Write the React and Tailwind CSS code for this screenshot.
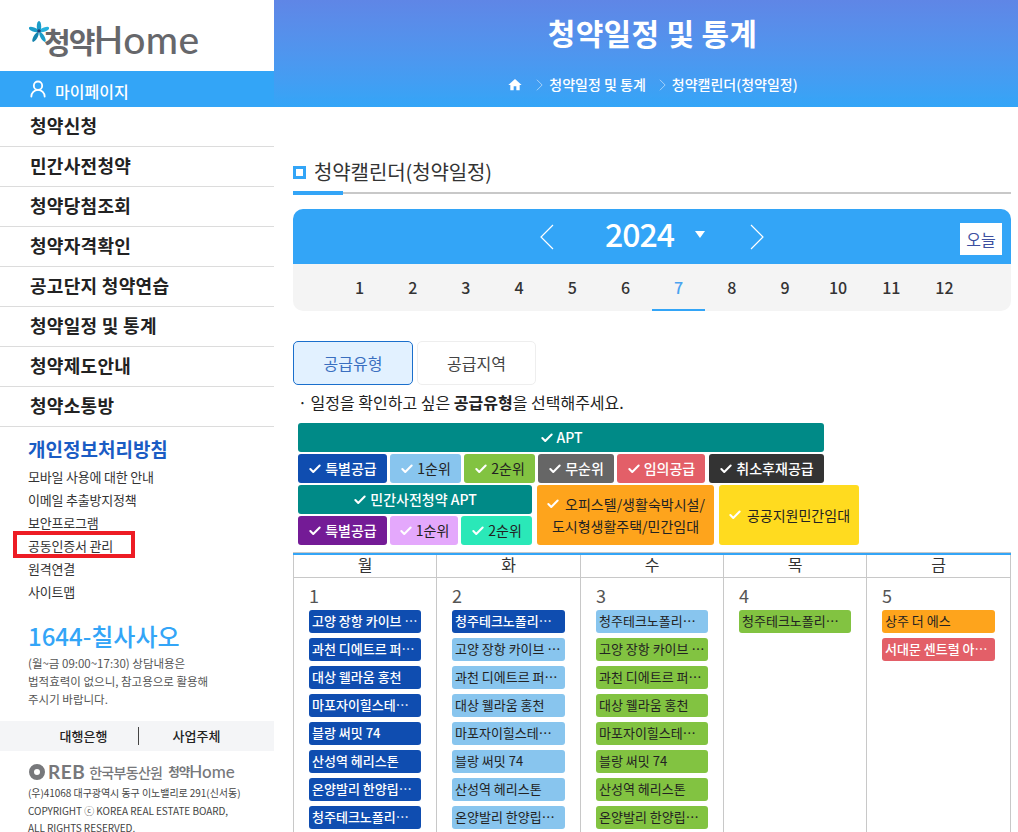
import React from "react";
import { Check, UserRound } from "lucide-react";
import { MdHome } from "react-icons/md";

const MENU = ["청약신청", "민간사전청약", "청약당첨조회", "청약자격확인", "공고단지 청약연습", "청약일정 및 통계", "청약제도안내", "청약소통방"];
const LINKS = ["모바일 사용에 대한 안내", "이메일 추출방지정책", "보안프로그램", "공동인증서 관리", "원격연결", "사이트맵"];
const MONTHS = [1, 2, 3, 4, 5, 6, 7, 8, 9, 10, 11, 12];

const NAMES = [
  "고양 장항 카이브 유시티 아파트",
  "과천 디에트르 퍼스티지 아파트",
  "대상 웰라움 홍천",
  "마포자이힐스테이트 라첼스",
  "블랑 써밋 74",
  "산성역 헤리스톤",
  "온양발리 한양립스 더 포레",
  "청주테크노폴리스 하트리움",
];
const MOVED = [NAMES[7], ...NAMES.slice(0, 7)];

const BLUE = "bg-[#0f4db0] text-white font-medium";
const SKY = "bg-[#88c5ee] text-[#222]";
const GREEN = "bg-[#82c341] text-[#222]";

const DAYS = [
  { day: "월", num: 1, width: "w-[144px]", chips: NAMES.map((n) => [n, BLUE]) },
  { day: "화", num: 2, width: "w-[144px]", chips: [[MOVED[0], BLUE], ...NAMES.slice(0, 7).map((n) => [n, SKY])] },
  { day: "수", num: 3, width: "w-[143px]", chips: [[MOVED[0], SKY], ...NAMES.slice(0, 7).map((n) => [n, GREEN])] },
  { day: "목", num: 4, width: "w-[143px]", chips: [[MOVED[0], GREEN]] },
  {
    day: "금",
    num: 5,
    width: "w-[144px]",
    chips: [
      ["상주 더 에스", "bg-[#fea41c] text-[#222]"],
      ["서대문 센트럴 아이파크", "bg-[#e35f68] text-white font-medium"],
    ],
  },
];

const Chevron = ({ dir, className }) => (
  <svg viewBox="0 0 16 26" className={className} fill="none" stroke="currentColor" strokeWidth="1.2">
    <path d={dir === "left" ? "M14 1 2 13l12 12" : "M2 1l12 12L2 25"} />
  </svg>
);

const Star = () => (
  <svg viewBox="0 0 20 23" className="w-[20px] h-[23px] shrink-0">
    <ellipse cx="10" cy="5.5" rx="2.2" ry="5.5" fill="#1b9cc9" />
    <ellipse cx="4.5" cy="8.5" rx="5" ry="2" transform="rotate(20 4.5 8.5)" fill="#1b9cc9" />
    <ellipse cx="15.5" cy="8.5" rx="5" ry="2" transform="rotate(-20 15.5 8.5)" fill="#27b1dd" />
    <ellipse cx="6.5" cy="16" rx="2" ry="5.5" transform="rotate(30 6.5 16)" fill="#1583ad" />
    <ellipse cx="13.5" cy="16" rx="2" ry="5.5" transform="rotate(-30 13.5 16)" fill="#1b9cc9" />
    <circle cx="10" cy="10" r="1.8" fill="#1d3f7a" />
  </svg>
);

const Sidebar = () => (
  <aside className="w-[274px] shrink-0 bg-white">
    <div className="h-[71px] pl-[29px] pt-[21px] flex items-start">
      <Star />
      <span className="-ml-[5px] mt-[2px] text-[29px] leading-[36px] font-bold text-[#66676b] tracking-[-2px]">청약</span>
      <span className="-mt-[4px] text-[39px] leading-[44px] font-['Lato'] font-medium tracking-[0.5px] text-[#66676b]">Home</span>
    </div>
    <div className="h-[36px] bg-[#33a5f7] flex items-center pl-[28px] gap-[7px] text-white">
      <UserRound size={20} strokeWidth={2.2} />
      <span className="text-[16px] font-medium pt-[3px]">마이페이지</span>
    </div>
    {MENU.map((m) => (
      <div key={m} className="h-[40px] border-b border-[#dcdcdc] pl-[30px] pb-[2px] flex items-center text-[18px] font-bold text-[#222] tracking-[0.3px]">
        {m}
      </div>
    ))}
    <div className="relative pl-[28px] pt-[9px]">
      <p className="text-[19px] leading-[26px] font-bold text-[#1a5cc4]">개인정보처리방침</p>
      <ul className="mt-[3px]">
        {LINKS.map((l) => (
          <li key={l} className="h-[23px] leading-[23px] text-[13px] tracking-[-0.2px] text-[#333]">{l}</li>
        ))}
      </ul>
      {/* highlight on the 공동인증서 link */}
      <div className="absolute left-[13px] top-[104px] w-[122px] h-[27px] border-[4px] border-[#ed1c24]" />
      <p className="mt-[16px] text-[24px] leading-[34px] font-medium text-[#33a5f7]">1644-칠사사오</p>
      <div className="mt-[1px] text-[11.5px] leading-[18px] text-[#555]">
        <p>(월~금 09:00~17:30) 상담내용은</p>
        <p>법적효력이 없으니, 참고용으로 활용해</p>
        <p>주시기 바랍니다.</p>
      </div>
    </div>
    <div className="mt-[13px] h-[30px] bg-[#f4f5f7] flex items-center text-[13px] font-medium text-[#222]">
      <span className="w-[139px] h-[18px] leading-[18px] text-center border-r border-[#444] pl-[29px]">대행은행</span>
      <span className="w-[135px] pr-[20px] text-center">사업주체</span>
    </div>
    <div className="pl-[29px] pt-[12px]">
      <div className="flex items-center h-[18px] text-[#77787b] whitespace-nowrap">
        <span className="w-[16px] h-[16px] rounded-full border-[5px] border-[#77787b] shrink-0" />
        <span className="ml-[3px] text-[19px] font-['Lato'] font-bold tracking-[0.5px]">REB</span>
        <span className="ml-[4px] text-[14px] font-medium tracking-[-0.7px]">한국부동산원</span>
        <span className="ml-[6px] text-[12.5px] font-bold tracking-[-1px]">청약</span>
        <span className="text-[17px] font-['Lato'] font-medium">Home</span>
      </div>
      <div className="mt-[3px] -ml-[1px] text-[10px] leading-[17.5px] text-[#444] tracking-[-0.05px] whitespace-nowrap">
        <p>(우)41068 대구광역시 동구 이노밸리로 291(신서동)</p>
        <p>COPYRIGHT ⓒ KOREA REAL ESTATE BOARD,</p>
        <p>ALL RIGHTS RESERVED.</p>
      </div>
    </div>
  </aside>
);

const TypeButton = ({ className, children }) => (
  <div className={`h-[29px] rounded-[3px] flex items-center justify-center gap-[3px] text-[14px] whitespace-nowrap ${className}`}>
    <Check size={14} strokeWidth={3.5} className="text-white shrink-0" />
    <span>{children}</span>
  </div>
);

const TypeFilters = () => (
  <div className="ml-[5px] mt-[9px] flex flex-col gap-[2px]">
    <TypeButton className="w-[526px] bg-[#008a87] text-white font-medium">APT</TypeButton>
    <div className="flex gap-[3px]">
      <TypeButton className="w-[89px] bg-[#0f4db0] text-white font-medium">특별공급</TypeButton>
      <TypeButton className="w-[71px] bg-[#88c5ee] text-[#222]">1순위</TypeButton>
      <TypeButton className="w-[71px] bg-[#82c341] text-[#222]">2순위</TypeButton>
      <TypeButton className="w-[76px] bg-[#666] text-white font-medium">무순위</TypeButton>
      <TypeButton className="w-[88px] bg-[#e35f68] text-white font-medium">임의공급</TypeButton>
      <TypeButton className="w-[115px] ml-[1px] bg-[#333] text-white font-medium">취소후재공급</TypeButton>
    </div>
    <div className="flex">
      <div className="w-[234px] flex flex-col gap-[2px]">
        <TypeButton className="bg-[#008a87] text-white font-medium">민간사전청약 APT</TypeButton>
        <div className="flex gap-[3px]">
          <TypeButton className="w-[89px] bg-[#741b96] text-white font-medium">특별공급</TypeButton>
          <TypeButton className="w-[68px] bg-[#e4a8fc] text-[#222]">1순위</TypeButton>
          <TypeButton className="w-[71px] bg-[#2ae8b8] text-[#222]">2순위</TypeButton>
        </div>
      </div>
      <div className="w-[177px] h-[60px] ml-[5px] rounded-[3px] bg-[#fea41c] text-[#222] text-[14px] leading-[22px] text-center flex flex-col justify-center whitespace-nowrap">
        <p className="flex items-center justify-center gap-[5px]">
          <Check size={14} strokeWidth={3.5} className="text-white shrink-0" />
          오피스텔/생활숙박시설/
        </p>
        <p>도시형생활주택/민간임대</p>
      </div>
      <TypeButton className="w-[140px] h-[60px] ml-[5px] bg-[#ffdb1f] text-[#222] gap-[5px]">공공지원민간임대</TypeButton>
    </div>
  </div>
);

const Calendar = () => (
  <div className="mt-[7px] border-t border-[#c8c8c8]">
    <div className="border-t-[2px] border-[#33a5f7]" />
    <div className="flex">
      {DAYS.map((d, i) => (
        <div key={d.day} className={`${d.width} h-[600px] border-r border-[#c8c8c8] ${i === 0 ? "border-l" : ""}`}>
          <div className="h-[23px] border-b border-[#c8c8c8] text-center text-[16px] leading-[19px] text-[#333]">{d.day}</div>
          <div className="px-[15px] pt-[5px]">
            <p className="text-[18px] leading-[24px] text-[#555]">{d.num}</p>
            <div className="mt-[3px] flex flex-col gap-[5px]">
              {d.chips.map(([name, cls], j) => (
                <div key={j} className={`h-[23px] rounded-[3px] pl-[3px] pr-[2px] text-[13px] leading-[22px] truncate ${cls}`}>{name}</div>
              ))}
            </div>
          </div>
        </div>
      ))}
    </div>
  </div>
);

export default function App() {
  return (
    <div className="flex h-screen w-full overflow-hidden bg-white font-['Noto_Sans_CJK_KR','Noto_Sans',sans-serif]">
      <Sidebar />
      <main className="flex-1 min-w-0">
        <header className="h-[107px] pl-[13px] bg-gradient-to-b from-[#5f86e6] to-[#33a5f7] text-white text-center">
          <h1 className="pt-[11px] text-[30px] leading-[42px] font-bold tracking-[0.3px]">청약일정 및 통계</h1>
          <div className="mt-[21px] flex items-center justify-center gap-[6px] text-[14px] font-medium">
            <MdHome size={16} className="mr-[7px]" />
            <Chevron dir="right" className="w-[7px] h-[14px]" />
            <span className="mr-[7px]">청약일정 및 통계</span>
            <Chevron dir="right" className="w-[7px] h-[14px]" />
            <span>청약캘린더(청약일정)</span>
          </div>
        </header>

        <div className="pl-[19px] pr-[7px]">
          <div className="relative mt-[48px] h-[39px] border-b-2 border-[#c8c8c8] flex items-start">
            <span className="mt-[11px] w-[13px] h-[13px] border-[3px] border-[#33a5f7]" />
            <h2 className="ml-[8px] text-[20px] leading-[34px] tracking-[-0.1px] text-[#333]">청약캘린더(청약일정)</h2>
            <span className="absolute left-0 -bottom-[3px] w-[50px] h-[4px] bg-[#33a5f7]" />
          </div>

          <div className="mt-[15px] rounded-[10px] overflow-hidden">
            <div className="relative h-[55px] bg-[#33a5f7] text-white flex items-center justify-center">
              <Chevron dir="left" className="absolute left-[246px] top-[15px] w-[16px] h-[26px]" />
              <span className="absolute left-[312px] top-[1px] text-[32px] leading-[46px] font-medium tracking-[-1px]">2024</span>
              <span className="absolute left-[402px] top-[22px] border-x-[5px] border-x-transparent border-t-[7px] border-t-white" />
              <Chevron dir="right" className="absolute left-[456px] top-[15px] w-[16px] h-[26px]" />
              <span className="absolute right-[9px] top-[14px] w-[42px] h-[32px] bg-white text-[#3d4fa0] text-[16px] leading-[32px] text-center">오늘</span>
            </div>
            <div className="h-[47px] bg-[#f4f4f4] px-[40px] flex">
              {MONTHS.map((m) => (
                <div
                  key={m}
                  className={`flex-1 text-center text-[16px] leading-[47px] font-medium ${m === 7 ? "text-[#4aa3f0] border-b-2 border-[#33a5f7]" : "text-[#333]"}`}
                >
                  {m}
                </div>
              ))}
            </div>
          </div>

          <div className="mt-[30px] flex gap-[4px] text-[16px]">
            <div className="w-[120px] h-[44px] rounded-[5px] border border-[#1a6fcc] bg-[#e2f1ff] text-[#3a6fc0] text-center leading-[42px]">공급유형</div>
            <div className="w-[119px] h-[44px] rounded-[5px] border border-[#eee] text-[#444] text-center leading-[42px]">공급지역</div>
          </div>
          <p className="mt-[5px] pl-[5px] text-[16px] leading-[24px] text-[#222]">
            · 일정을 확인하고 싶은 <b className="font-bold">공급유형</b>을 선택해주세요.
          </p>

          <TypeFilters />
          <Calendar />
        </div>
      </main>
    </div>
  );
}
